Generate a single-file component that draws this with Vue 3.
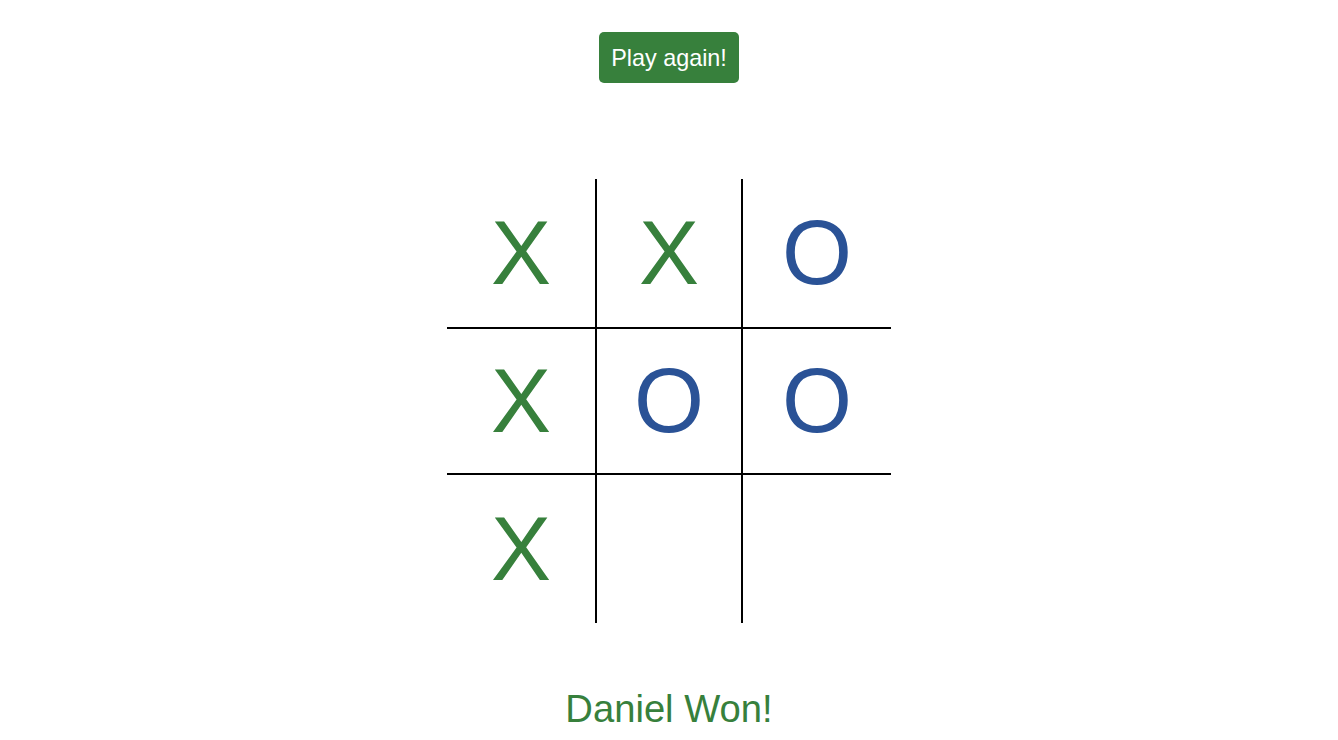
<script setup>
const cells = ['X', 'X', 'O', 'X', 'O', 'O', 'X', '', '']
</script>

<template>
  <main class="game">
    <button class="again">Play again!</button>
    <div class="board">
      <div v-for="(mark, i) in cells" :key="i" class="cell" :class="[mark === 'O' ? 'o' : 'x', { mid: i % 3 === 1, row: i > 2 && i < 6 }]">{{ mark }}</div>
    </div>
    <div class="result">Daniel Won!</div>
  </main>
</template>

<style>
html, body { height: 100%; margin: 0; overflow: hidden; background: #fff; }
</style>

<style scoped>
.game {
  height: 740px;
  display: flex;
  flex-direction: column;
  align-items: center;
  font-family: "Liberation Sans", Arial, sans-serif;
}
.again {
  box-sizing: border-box;
  flex: none;
  width: 140px;
  height: 51px;
  margin-top: 32px;
  padding: 2px 0 0;
  border: none;
  border-radius: 5px;
  background: #37803c;
  color: #fff;
  font-family: inherit;
  font-size: 23.4px;
  line-height: normal;
}
.board {
  flex: none;
  display: grid;
  grid-template-columns: repeat(3, 148px);
  grid-template-rows: repeat(3, 148px);
  margin-top: 96px;
}
.cell {
  box-sizing: border-box;
  display: flex;
  align-items: center;
  justify-content: center;
  font-size: 90px;
  line-height: 90px;
}
.mid { border-left: 2px solid #000; border-right: 2px solid #000; }
.row { border-top: 2px solid #000; border-bottom: 2px solid #000; }
.x { color: #37803c; }
.o { color: #2a5296; }
.result {
  flex: none;
  margin-top: 64px;
  color: #37803c;
  font-size: 38.2px;
  line-height: 43px;
}
</style>
